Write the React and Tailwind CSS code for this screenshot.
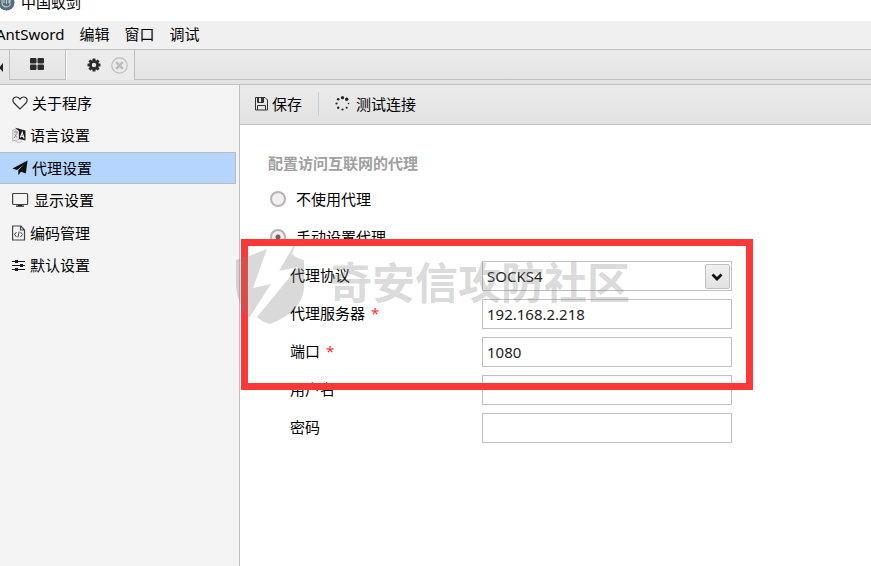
import { useState } from "react";

const ui = "font-['Noto_Sans','Noto_Sans_CJK_SC',sans-serif]";

const HeartIcon = () => (
  <svg width="16" height="16" viewBox="0 0 16 16" fill="none" stroke="#333" strokeWidth="1.2" aria-hidden="true">
    <path d="M8 14 2 8C-.2 5.4 1.2 2 4.2 2 6 2 7.2 3 8 4.2 8.8 3 10 2 11.8 2 14.8 2 16.2 5.4 14 8Z" />
  </svg>
);

const LanguageIcon = () => (
  <svg width="14" height="16" viewBox="0 0 14 16" aria-hidden="true">
    <path d="M.8 3 7 1.500v11L.8 14Z" fill="#eee" stroke="#aaa" strokeWidth=".8" />
    <path d="M2 5h4M4 3.500v2M2.300 11 5.300 5.500M2.500 7 5 10.500" stroke="#888" fill="none" strokeWidth=".9" />
    <path d="M3 .8 13.500 3.500v10L7 12V4Z" fill="#1c1c1c" />
    <path d="m8.300 10.500 1.900-5 1.900 6M9 9l2.600.7" stroke="#fff" strokeWidth="1.100" fill="none" />
    <path d="M3.500 14.500c3 1.500 5 .8 6.500-.5" stroke="#bbb" fill="none" />
  </svg>
);

const PlaneIcon = () => (
  <svg width="16" height="16" viewBox="0 0 16 16" aria-hidden="true">
    <path d="M15.600.4 13.800 13.600 9 11.800 6.300 15.200V10.800L13 4 5 9.900.4 8.400Z" fill="#111" />
    <path d="M6 10.500 13.500 3.500 8 11Z" fill="#111" />
  </svg>
);

const MonitorIcon = () => (
  <svg width="18" height="16" viewBox="0 0 18 16" aria-hidden="true">
    <rect x=".6" y="1.500" width="15" height="11" rx="1" fill="none" stroke="#444" strokeWidth="1.200" />
    <path d="M6 13h4v.600h2v1.200H4v-1.200h2Z" fill="#222" />
  </svg>
);

const FileCodeIcon = () => (
  <svg width="14" height="16" viewBox="0 0 14 16" fill="none" stroke="#444" aria-hidden="true">
    <path d="M.6 1h8.400l3.500 4v10H.6ZM8.500 1v4h4" strokeWidth="1.200" />
    <path d="M4.500 7 2.500 9.500l2 2.500M8.500 7l2 2.500-2 2.500M7.200 6.500 5.800 12.500" />
  </svg>
);

const SlidersIcon = () => (
  <svg width="14" height="16" viewBox="0 0 14 16" fill="#1c1c1c" aria-hidden="true">
    <path d="M0 4h13v1H0zM0 8h13v1H0zM0 12h13v1H0z" />
    <path d="M3 3h3v3H3zM8 7h3v3H8zM3 11h3v3H3z" />
  </svg>
);

const SaveIcon = () => (
  <svg width="13" height="14" viewBox="0 0 13 14" fill="none" stroke="#333" aria-hidden="true">
    <path d="M.5.5H10L12.500 3v10H.5Z" />
    <path d="M2.500 1v4.500h6V1M2.500 13V8.500h8V13" />
    <path d="M6 1h2v4H6zM2.500 1h1.500v4H2.500z" fill="#333" stroke="none" />
  </svg>
);

const SpinnerIcon = () => (
  <svg width="15" height="15" viewBox="0 0 15 15" fill="#222" aria-hidden="true">
    <circle cx="7.500" cy="1.700" r="1.600" />
    <circle cx="11.700" cy="3.200" r="1.700" />
    <circle cx="13.500" cy="7.500" r=".8" />
    <circle cx="11.700" cy="11.700" r="1" />
    <circle cx="7.500" cy="13.500" r="1.100" />
    <circle cx="3.200" cy="11.700" r="1.200" />
    <circle cx="1.500" cy="7.500" r="1.100" />
    <circle cx="3.200" cy="3.200" r="1.300" />
  </svg>
);

const GridIcon = () => (
  <svg width="14" height="12" viewBox="0 0 14 12" fill="#2b2b2b" aria-hidden="true">
    <rect width="6.500" height="5.400" rx="1" />
    <rect x="7.500" width="6.500" height="5.400" rx="1" />
    <rect y="6.600" width="6.500" height="5.400" rx="1" />
    <rect x="7.500" y="6.600" width="6.500" height="5.400" rx="1" />
  </svg>
);

const GearIcon = () => (
  <svg width="14" height="14" viewBox="0 0 14 14" aria-hidden="true">
    <g fill="#2b2b2b">
      <rect x="5.500" y=".5" width="3" height="13" rx=".5" />
      <rect x="5.500" y=".5" width="3" height="13" rx=".5" transform="rotate(45 7 7)" />
      <rect x="5.500" y=".5" width="3" height="13" rx=".5" transform="rotate(90 7 7)" />
      <rect x="5.500" y=".5" width="3" height="13" rx=".5" transform="rotate(135 7 7)" />
      <circle cx="7" cy="7" r="4.800" />
    </g>
    <circle cx="7" cy="7" r="2.200" fill="#ebebeb" />
  </svg>
);

const CloseIcon = () => (
  <svg width="17" height="17" viewBox="0 0 17 17" fill="none" stroke="#bdbdbd" aria-hidden="true">
    <circle cx="8.500" cy="8.500" r="7.700" strokeWidth="1.200" />
    <path d="m5.200 5.200 6.600 6.600M11.800 5.200l-6.600 6.600" strokeWidth="2.400" />
  </svg>
);

const AppLogo = () => (
  <svg width="17" height="17" viewBox="0 0 17 17" aria-hidden="true">
    <circle cx="8.500" cy="8.500" r="8" fill="#566f7a" />
    <path d="M4 6v3c0 4 6 5 8 2V5M8.500 3v7M6 5v4M11 4v5" stroke="#b9c9cf" strokeWidth="1.200" fill="none" />
  </svg>
);

const sections = [
  { label: "关于程序", Icon: HeartIcon },
  { label: "语言设置", Icon: LanguageIcon },
  { label: "代理设置", Icon: PlaneIcon },
  { label: "显示设置", Icon: MonitorIcon },
  { label: "编码管理", Icon: FileCodeIcon },
  { label: "默认设置", Icon: SlidersIcon },
];

const textFields = [
  { id: "server", label: "代理服务器", required: true, value: "192.168.2.218" },
  { id: "port", label: "端口", required: true, value: "1080" },
  { id: "user", label: "用户名", value: "" },
  { id: "password", label: "密码", value: "", type: "password" },
];

function MenuBar() {
  return (
    <nav className="flex h-7 items-center gap-[15px] bg-[#f0f0f0] pb-[2px]">
      <button className="-ml-1">AntSword</button>
      <button>编辑</button>
      <button>窗口</button>
      <button>调试</button>
    </nav>
  );
}

function TabBar() {
  return (
    <div className="h-9 border-y border-[#c0c0c0] bg-linear-to-b from-[#ebebeb] to-[#e3e3e3]">
      <div className="flex h-[30px]">
        <button aria-label="向左" className="flex w-[10px] items-center border-r border-[#c0c0c0] pt-1">
          <svg width="3" height="9" viewBox="0 0 3 9" aria-hidden="true">
            <path d="M3 0v9L-1 4.500Z" fill="#222" />
          </svg>
        </button>
        <button
          aria-label="首页"
          className="flex w-14 items-center justify-center border-r border-b border-[#c0c0c0] pr-[2px] pb-[2px]"
        >
          <GridIcon />
        </button>
        <div className="flex w-[69px] items-center justify-between border-r border-l border-[#c0c0c0] border-l-[#fafafa] bg-[#ebebeb] pr-[6px] pl-5">
          <button aria-label="设置"><GearIcon /></button>
          <button aria-label="关闭"><CloseIcon /></button>
        </div>
        <div className="flex-1 border-b border-[#c0c0c0]" />
      </div>
    </div>
  );
}

function Sidebar({ active, onSelect }) {
  return (
    <aside className="w-60 shrink-0 border-r border-[#c0c0c0] bg-[#f4f4f4] pt-[2px]">
      <ul className="grid h-[195px] auto-rows-fr">
        {sections.map(({ label, Icon }) => (
          <li key={label} className="pr-[3px]">
            <button
              onClick={() => onSelect(label)}
              className={`flex h-8 w-full items-center gap-1 border-y border-r pb-px pl-3 ${
                active === label ? "border-[#b8bcc4] bg-[#b5d5ff]" : "border-transparent"
              }`}
            >
              <Icon />
              {label}
            </button>
          </li>
        ))}
      </ul>
    </aside>
  );
}

function Watermark() {
  return (
    <div
      className="pointer-events-none absolute top-[115px] -left-[5px] flex items-center gap-6 whitespace-nowrap text-[#808080]/30"
      aria-hidden="true"
    >
      <svg width="70" height="86" viewBox="0 0 70 86" fill="currentColor">
        <path d="M1 20 14 16 32 9 18 48 36 44 14 78Q3 66 1 46Z" />
        <path d="M62 0 57 14Q63 19 69 20V48Q67 72 35 84 27 82 22 77L63 27 44 31Z" />
      </svg>
      <span className="text-[43px] leading-[60px] font-bold">奇安信攻防社区</span>
    </div>
  );
}

function ProxyForm() {
  const [mode, setMode] = useState("manual");
  const radio =
    "size-4 appearance-none rounded-full border-2 border-[#b8b4b6] bg-[#f0f0f0] checked:bg-[radial-gradient(circle,#7d5a5f_0_2px,#f0f0f0_3px)]";
  const box = "h-[30px] w-[250px] border border-[#c0c0c0] px-1 text-[#222]";
  const choice = "flex h-[38px] items-center gap-[10px] pb-[2px] pl-[2px]";
  return (
    <form className="relative flex-1 pt-5 pl-7">
      <h2 className="h-[36px] leading-[36px] font-bold text-[#a0a0a0]">配置访问互联网的代理</h2>
      <label className={choice}>
        <input type="radio" name="mode" className={radio} checked={mode === "none"} onChange={() => setMode("none")} />
        不使用代理
      </label>
      <label className={choice}>
        <input type="radio" name="mode" className={radio} checked={mode === "manual"} onChange={() => setMode("manual")} />
        手动设置代理
      </label>
      <div className="flex h-[38px] items-center pl-[22px]">
        <label htmlFor="protocol" className="w-48 pb-[2px]">代理协议</label>
        <div className="relative">
          <select id="protocol" defaultValue="SOCKS4" className={`${box} appearance-none`}>
            <option>HTTP</option>
            <option>HTTPS</option>
            <option>SOCKS4</option>
            <option>SOCKS5</option>
          </select>
          <span className="pointer-events-none absolute top-[3px] right-[2px] flex size-[25px] items-center justify-center rounded-xs border border-[#c0c0c0] bg-linear-to-b from-[#efefef] to-[#e2e2e2] pr-px">
            <svg width="12" height="8" viewBox="0 0 12 8" fill="none" stroke="#111" strokeWidth="2.8" aria-hidden="true">
              <path d="m1.500 1.500 4.500 4.500 4.500-4.500" />
            </svg>
          </span>
        </div>
      </div>
      {textFields.map((field) => (
        <div key={field.id} className="flex h-[38px] items-center pl-[22px]">
          <label htmlFor={field.id} className="flex w-48 gap-[6px] pb-[2px]">
            {field.label}
            {field.required && <span className="text-[#ff3030]">*</span>}
          </label>
          <input id={field.id} type={field.type ?? "text"} defaultValue={field.value} className={box} />
        </div>
      ))}
      <div className="pointer-events-none absolute top-[114px] left-px h-[151px] w-[512px] border-7 border-[#fc3838]" />
      <Watermark />
    </form>
  );
}

export default function App() {
  const [active, setActive] = useState("代理设置");
  return (
    <div className={`${ui} flex min-h-screen flex-col overflow-hidden bg-white text-[15px] leading-[22px] text-black`}>
      <header className="flex h-[21px] items-start gap-[6px] overflow-hidden">
        <span className="-mt-[6px] -ml-[2px]"><AppLogo /></span>
        <span className="-mt-[9px]">中国蚁剑</span>
      </header>
      <MenuBar />
      <TabBar />
      <main className="flex flex-1">
        <Sidebar active={active} onSelect={setActive} />
        <section className="flex min-w-0 flex-1 flex-col">
          <div className="flex h-10 items-center border-b border-[#c0c0c0] bg-linear-to-b from-[#ebebeb] to-[#e2e2e2] pb-[2px] pl-[15px]">
            <button className="flex items-center gap-1"><SaveIcon />保存</button>
            <span className="mx-4 h-6 w-px bg-[#c3cdd2]" />
            <button className="flex items-center gap-[6px]"><SpinnerIcon />测试连接</button>
          </div>
          <ProxyForm />
        </section>
      </main>
    </div>
  );
}
